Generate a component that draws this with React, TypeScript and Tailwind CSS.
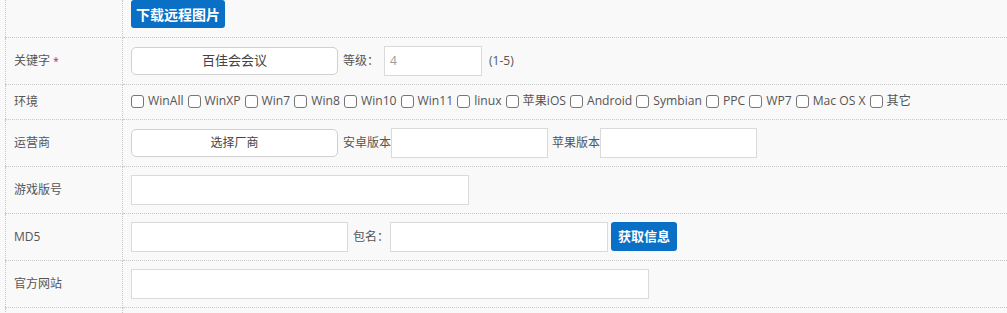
const envs = ['WinAll', 'WinXP', 'Win7', 'Win8', 'Win10', 'Win11', 'linux', '苹果iOS', 'Android', 'Symbian', 'PPC', 'WP7', 'Mac OS X', '其它'];

function Check({ label }: { label: string }) {
  return (
    <label className="flex items-center gap-[4px] mr-[4px]">
      <span className="w-[13px] h-[13px] border border-[#767676] rounded-[3px] bg-white" />
      <span>{label}</span>
    </label>
  );
}

function Label({ children }: { children: React.ReactNode }) {
  return (
    <td className="w-[117px] pl-[8px] border-r border-b border-dotted border-[#c8c8c8] align-middle text-[#555]">
      {children}
    </td>
  );
}

export default function App() {
  const cell = 'pl-[8px] border-b border-dotted border-[#c8c8c8] align-middle';
  const box = 'h-[30px] border border-[#dadada] bg-white px-[5px] outline-none';
  return (
    <div className="h-[313px] overflow-hidden bg-[#f9f9f9] pl-[5px] text-[12px] text-[#555] font-['Open_Sans','Noto_Sans_CJK_SC',sans-serif]">
      <table className="w-full border-collapse border-l border-dotted border-[#c8c8c8]">
        <tbody>
          <tr className="h-[37px]">
            <td className="w-[117px] border-r border-b border-dotted border-[#c8c8c8]" />
            <td className="pl-[8px] pb-[8px] align-top border-b border-dotted border-[#c8c8c8]">
              <button className="h-[28px] w-[94px] rounded-[3px] bg-[#0a70c6] text-white text-[14px] font-bold">下载远程图片</button>
            </td>
          </tr>
          <tr className="h-[47px]">
            <Label>
              关键字 <span className="text-[10px] text-[#c0146e]">*</span>
            </Label>
            <td className={cell}>
              <div className="flex items-center">
                <div className="w-[207px] h-[28px] rounded-[5px] border border-[#d0d0d0] bg-white flex items-center justify-center text-[13px] text-[#444]">百佳会会议</div>
                <span className="ml-[5px]">等级：</span>
                <input className={`${box} ml-[5px] w-[98px] text-[#999]`} defaultValue="4" />
                <span className="ml-[7px]">(1-5)</span>
              </div>
            </td>
          </tr>
          <tr className="h-[35px]">
            <Label>环境</Label>
            <td className={cell}>
              <div className="flex items-center text-[12.15px] text-[#555]">
                {envs.map(e => (
                  <Check key={e} label={e} />
                ))}
              </div>
            </td>
          </tr>
          <tr className="h-[47px]">
            <Label>运营商</Label>
            <td className={cell}>
              <div className="flex items-center">
                <div className="w-[207px] h-[28px] rounded-[5px] border border-[#d0d0d0] bg-white flex items-center justify-center text-[#444]">选择厂商</div>
                <span className="ml-[5px]">安卓版本</span>
                <input className={`${box} w-[157px]`} />
                <span className="ml-[4px]">苹果版本</span>
                <input className={`${box} w-[157px]`} />
              </div>
            </td>
          </tr>
          <tr className="h-[47px]">
            <Label>游戏版号</Label>
            <td className={cell}>
              <input className={`${box} w-[338px] block`} />
            </td>
          </tr>
          <tr className="h-[47px]">
            <Label>MD5</Label>
            <td className={cell}>
              <div className="flex items-center">
                <input className={`${box} w-[217px]`} />
                <span className="ml-[5px]">包名：</span>
                <input className={`${box} ml-[1px] w-[218px]`} />
                <button className="ml-[3px] h-[29px] w-[66px] rounded-[3px] bg-[#0a70c6] text-white text-[13px] font-bold">获取信息</button>
              </div>
            </td>
          </tr>
          <tr className="h-[47px]">
            <Label>官方网站</Label>
            <td className={cell}>
              <input className={`${box} w-[518px] block`} />
            </td>
          </tr>
          <tr className="h-[47px]">
            <Label>{''}</Label>
            <td className={cell} />
          </tr>
        </tbody>
      </table>
    </div>
  );
}
